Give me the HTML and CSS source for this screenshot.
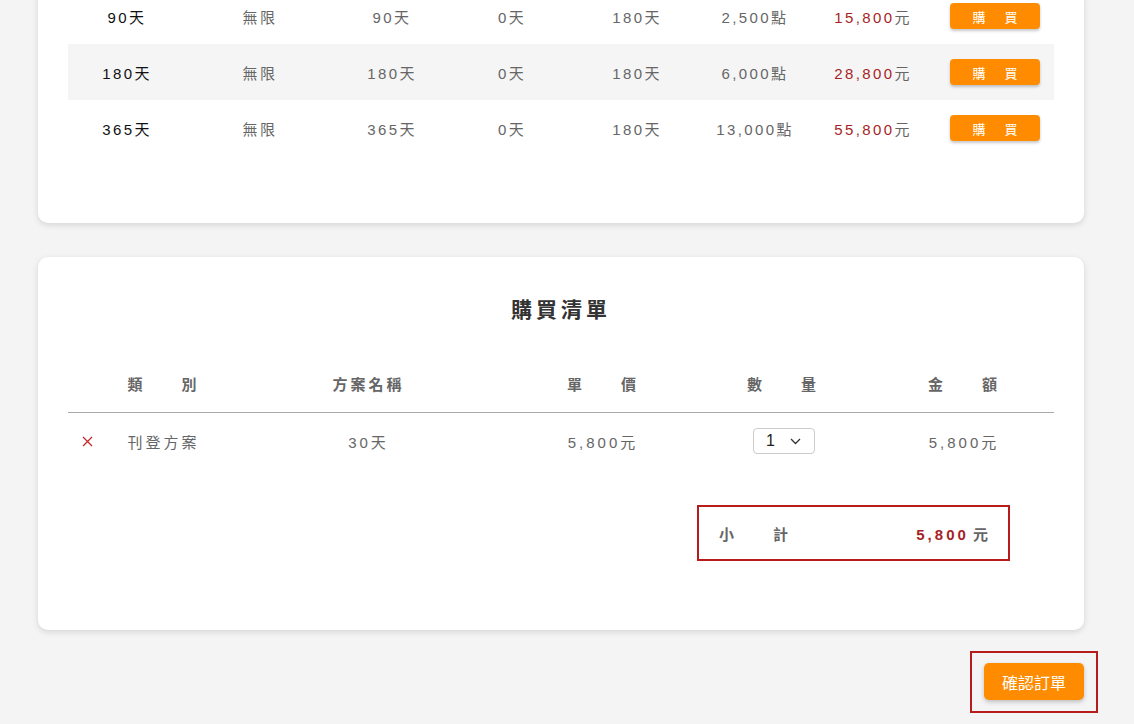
FILE: index.html
```html
<!DOCTYPE html>
<html lang="zh-Hant">
<head>
  <meta charset="UTF-8" />
  <meta name="viewport" content="width=device-width, initial-scale=1.0"/>
  <title>購買方案</title>
  <link rel="stylesheet" href="styles.css">
</head>
<body>
  <div class="page">
    <div class="card plans">
      <table class="plan-table">
        <colgroup>
          <col style="width:118px"><col style="width:148px"><col style="width:116px"><col style="width:124px">
          <col style="width:126px"><col style="width:110px"><col style="width:126px"><col style="width:118px">
        </colgroup>
        <tr>
          <td class="name">90天</td>
          <td>無限</td>
          <td>90天</td>
          <td>0天</td>
          <td>180天</td>
          <td>2,500點</td>
          <td class="price">15,800<span>元</span></td>
          <td><button class="buy-btn">購　買</button></td>
        </tr>
        <tr class="stripe">
          <td class="name">180天</td>
          <td>無限</td>
          <td>180天</td>
          <td>0天</td>
          <td>180天</td>
          <td>6,000點</td>
          <td class="price">28,800<span>元</span></td>
          <td><button class="buy-btn">購　買</button></td>
        </tr>
        <tr>
          <td class="name">365天</td>
          <td>無限</td>
          <td>365天</td>
          <td>0天</td>
          <td>180天</td>
          <td>13,000點</td>
          <td class="price">55,800<span>元</span></td>
          <td><button class="buy-btn">購　買</button></td>
        </tr>
      </table>
    </div>

    <div class="card cart">
      <h2 class="cart-title">購買清單</h2>
      <table class="cart-table">
        <colgroup>
          <col style="width:36px"><col style="width:119px"><col style="width:291px">
          <col style="width:178px"><col style="width:182px"><col style="width:180px">
        </colgroup>
        <thead>
          <tr>
            <th></th>
            <th>類　　別</th>
            <th>方案名稱</th>
            <th>單　　價</th>
            <th>數　　量</th>
            <th>金　　額</th>
          </tr>
        </thead>
        <tbody>
          <tr>
            <td>
              <button class="remove-btn" title="移除">
                <svg width="11" height="11" viewBox="0 0 11 11"><path d="M1 1L10 10M10 1L1 10" stroke="#c62828" stroke-width="1.3" fill="none"/></svg>
              </button>
            </td>
            <td>刊登方案</td>
            <td>30天</td>
            <td>5,800元</td>
            <td>
              <div class="qty-select">
                <span>1</span>
                <svg width="11" height="7" viewBox="0 0 11 7"><path d="M1 1L5.5 5.5L10 1" stroke="#333" stroke-width="1.3" fill="none"/></svg>
              </div>
            </td>
            <td>5,800元</td>
          </tr>
        </tbody>
      </table>

      <div class="subtotal">
        <span class="subtotal-label">小　　計</span>
        <span class="subtotal-value"><b>5,800</b> 元</span>
      </div>
    </div>

    <div class="actions">
      <div class="confirm-box">
        <button class="confirm-btn">確認訂單</button>
      </div>
    </div>
  </div>
</body>
</html>
```

FILE: styles.css
```css
* {
  box-sizing: border-box;
}
body {
  margin: 0;
  background-color: #f4f4f4;
  font-family: 'Liberation Sans', 'Noto Sans CJK TC', sans-serif;
  color: #666;
}
.page {
  width: 1046px;
  margin-left: 38px;
}
.card {
  background: #fff;
  border-radius: 10px;
  box-shadow: 0 2px 6px rgba(0,0,0,0.13);
}
.plans {
  margin-top: -12px;
  padding: 0 30px 67px;
}
table {
  width: 100%;
  border-collapse: collapse;
  table-layout: fixed;
}
.plan-table td {
  height: 56px;
  padding: 0;
  text-align: center;
  vertical-align: middle;
  font-size: 15px;
  letter-spacing: 2.4px;
  color: #666;
}
.plan-table .stripe td {
  background: #f5f5f5;
}
.plan-table td.name {
  color: #111;
}
.plan-table td.price {
  color: #a61f26;
}
.plan-table td.price span {
  color: #666;
}
.buy-btn {
  width: 90px;
  height: 26px;
  border: none;
  border-radius: 4px;
  background: #ff8c00;
  color: #fff;
  font-family: inherit;
  font-size: 13px;
  letter-spacing: 3px;
  padding: 0 0 0 3px;
  box-shadow: 0 2px 3px rgba(0,0,0,0.22);
  cursor: pointer;
}
.cart {
  margin-top: 34px;
  padding: 39px 30px 69px;
}
.cart-title {
  margin: 0 0 32px;
  text-align: center;
  font-size: 21px;
  line-height: 28px;
  letter-spacing: 4px;
  font-weight: bold;
  color: #333;
}
.cart-table th {
  height: 56px;
  padding: 0;
  font-size: 15px;
  font-weight: bold;
  letter-spacing: 3px;
  color: #666;
  text-align: center;
  border-bottom: 1px solid #aaa;
}
.cart-table td {
  height: 58px;
  padding: 0;
  font-size: 15px;
  letter-spacing: 3px;
  color: #666;
  text-align: center;
  vertical-align: middle;
}
.remove-btn {
  border: none;
  background: none;
  padding: 0;
  margin-left: 2px;
  cursor: pointer;
  display: inline-flex;
}
.qty-select {
  display: inline-flex;
  align-items: center;
  width: 62px;
  height: 26px;
  padding-left: 12px;
  border: 1px solid #ccc;
  border-radius: 4px;
  letter-spacing: 0;
  font-size: 16px;
  color: #222;
  vertical-align: middle;
  margin-left: 2px;
}
.qty-select svg {
  margin-left: 15px;
}
.subtotal {
  width: 313px;
  height: 56px;
  margin: 35px 44px 0 auto;
  padding: 0 20px;
  border: 2px solid #b71c1c;
  display: flex;
  align-items: center;
  justify-content: space-between;
  font-size: 15px;
  font-weight: bold;
  letter-spacing: 3px;
  color: #666;
}
.subtotal-value {
  letter-spacing: 0;
}
.subtotal-value b {
  color: #a61f26;
  letter-spacing: 3px;
}
.actions {
  display: flex;
  justify-content: flex-end;
  margin-top: 21px;
  margin-right: -14px;
}
.confirm-box {
  border: 2px solid #b71c1c;
  padding: 10px 12px 11px;
}
.confirm-btn {
  display: block;
  height: 37px;
  padding: 0 18px;
  border: none;
  border-radius: 5px;
  background: #ff8c00;
  color: #fff;
  font-family: inherit;
  font-size: 16px;
  box-shadow: 0 2px 4px rgba(0,0,0,0.22);
  cursor: pointer;
}
```
